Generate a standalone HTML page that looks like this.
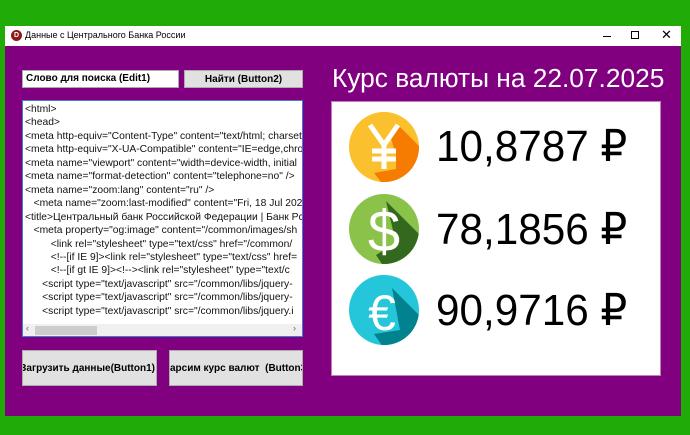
<!DOCTYPE html>
<html><head><meta charset="utf-8"><style>
*{margin:0;padding:0;box-sizing:border-box}
body{width:690px;height:435px;background:#21ab06;position:relative;overflow:hidden;font-family:"Liberation Sans","DejaVu Sans",sans-serif}
.win{position:absolute;left:5px;top:26px;width:676px;height:390px;background:#800080}
.tb{position:absolute;left:0;top:0;width:676px;height:20px;background:#fff;font-size:9px;color:#000}
.abs{position:absolute}
.memo{position:absolute;left:17px;top:74px;width:281px;height:237px;background:#fff;border:1px solid #3c7fd6;overflow:hidden}
.memo pre{font-family:"Liberation Sans",sans-serif;font-size:10.3px;line-height:13.45px;color:#111;position:absolute;left:2px;top:2px;white-space:pre}
.btn{position:absolute;background:#e1e1e1;border:1px solid #adadad;font-weight:bold;font-size:10px;color:#000;display:flex;align-items:center;justify-content:center;white-space:nowrap;overflow:hidden}
.num{position:absolute;left:104px;font-size:44px;color:#000;font-family:"Liberation Sans",sans-serif;transform:scaleX(0.96);transform-origin:left}
</style></head><body>
<div class="win">
 <div class="tb">
  <div class="abs" style="left:6px;top:4px;width:11px;height:11px;border-radius:50%;background:#8b1a1a;color:#fff;font-size:7px;line-height:11px;text-align:center;font-weight:bold">D</div>
  <div class="abs" style="left:20px;top:4px">Данные с Центрального Банка России</div>
  <div class="abs" style="left:598px;top:10px;width:8px;height:1px;background:#000"></div>
  <div class="abs" style="left:626px;top:5px;width:8px;height:8px;border:1px solid #000"></div>
  <div class="abs" style="left:656px;top:1px;font-size:13px">✕</div>
 </div>
 <div class="abs" style="left:17px;top:44px;width:157px;height:18px;background:#fff;border:1px solid #aaa;font-size:10px;font-weight:bold;padding:2px 3px">Слово для поиска (Edit1)</div>
 <div class="btn" style="left:179px;top:44px;width:119px;height:18px">Найти (Button2)</div>
 <div class="memo"><pre>&lt;html&gt;
&lt;head&gt;
&lt;meta http-equiv="Content-Type" content="text/html; charset
&lt;meta http-equiv="X-UA-Compatible" content="IE=edge,chro
&lt;meta name="viewport" content="width=device-width, initial
&lt;meta name="format-detection" content="telephone=no" /&gt;
&lt;meta name="zoom:lang" content="ru" /&gt;
   &lt;meta name="zoom:last-modified" content="Fri, 18 Jul 202
&lt;title&gt;Центральный банк Российской Федерации | Банк Рс
   &lt;meta property="og:image" content="/common/images/sh
         &lt;link rel="stylesheet" type="text/css" href="/common/
         &lt;!--[if IE 9]&gt;&lt;link rel="stylesheet" type="text/css" href=
         &lt;!--[if gt IE 9]&gt;&lt;!--&gt;&lt;link rel="stylesheet" type="text/c
      &lt;script type="text/javascript" src="/common/libs/jquery-
      &lt;script type="text/javascript" src="/common/libs/jquery-
      &lt;script type="text/javascript" src="/common/libs/jquery.i</pre>
  <div class="abs" style="left:0;top:223px;width:279px;height:12px;background:#f0f0f0"></div>
  <div class="abs" style="left:12px;top:225px;width:62px;height:9px;background:#cdcdcd"></div>
  <div class="abs" style="left:3px;top:222px;font-size:9px;color:#666">‹</div>
  <div class="abs" style="left:270px;top:222px;font-size:9px;color:#666">›</div>
 </div>
 <div class="btn" style="left:17px;top:324px;width:135px;height:36px;justify-content:flex-end;padding-right:1px">Загрузить данные(Button1)</div>
 <div class="btn" style="left:164px;top:324px;width:134px;height:36px;justify-content:flex-start">арсим курс валют&nbsp;&nbsp;(Button3</div>
 <div class="abs" style="left:327px;top:37px;font-size:26.3px;color:#fff;white-space:nowrap">Курс валюты на 22.07.2025</div>
 <div class="abs" style="left:326px;top:75px;width:330px;height:275px;background:#fff;border:1px solid #c080c0">
  <svg class="abs" style="left:16px;top:9px" width="72" height="72" viewBox="0 0 72 72"><defs><clipPath id="c1"><circle cx="36" cy="36" r="35"/></clipPath></defs><circle cx="36" cy="36" r="35" fill="#fbc02d"/><path clip-path="url(#c1)" d="M42 24 L50 14 L80 44 L80 80 L40 80 L26 62 L48 58 L48 44 Z" fill="#f57c00"/><path d="M22 14 L36 34 L50 14 M36 34 L36 58 M24 40 L48 40 M24 48 L48 48" stroke="#fff" stroke-width="5" fill="none"/></svg>
  <svg class="abs" style="left:16px;top:91px" width="72" height="72" viewBox="0 0 72 72"><defs><clipPath id="c2"><circle cx="36" cy="36" r="35"/></clipPath></defs><circle cx="36" cy="36" r="35" fill="#8bc34a"/><path clip-path="url(#c2)" d="M38 8 L80 50 L80 80 L40 80 L28 62 L48 50 Z" fill="#33691e"/><text x="36" y="58" font-size="58" fill="#fff" text-anchor="middle" font-family="Liberation Sans">$</text></svg>
  <svg class="abs" style="left:16px;top:172px" width="72" height="72" viewBox="0 0 72 72"><defs><clipPath id="c3"><circle cx="36" cy="36" r="35"/></clipPath></defs><circle cx="36" cy="36" r="35" fill="#26c6da"/><path clip-path="url(#c3)" d="M44 14 L80 50 L80 80 L40 80 L26 60 L52 56 Z" fill="#00838f"/><text x="34" y="56" font-size="50" fill="#fff" text-anchor="middle" font-family="Liberation Sans">€</text></svg>
  <div class="num" style="top:19px">10,8787 ₽</div>
  <div class="num" style="top:102px">78,1856 ₽</div>
  <div class="num" style="top:183px">90,9716 ₽</div>
 </div>
</div>
</body></html>
